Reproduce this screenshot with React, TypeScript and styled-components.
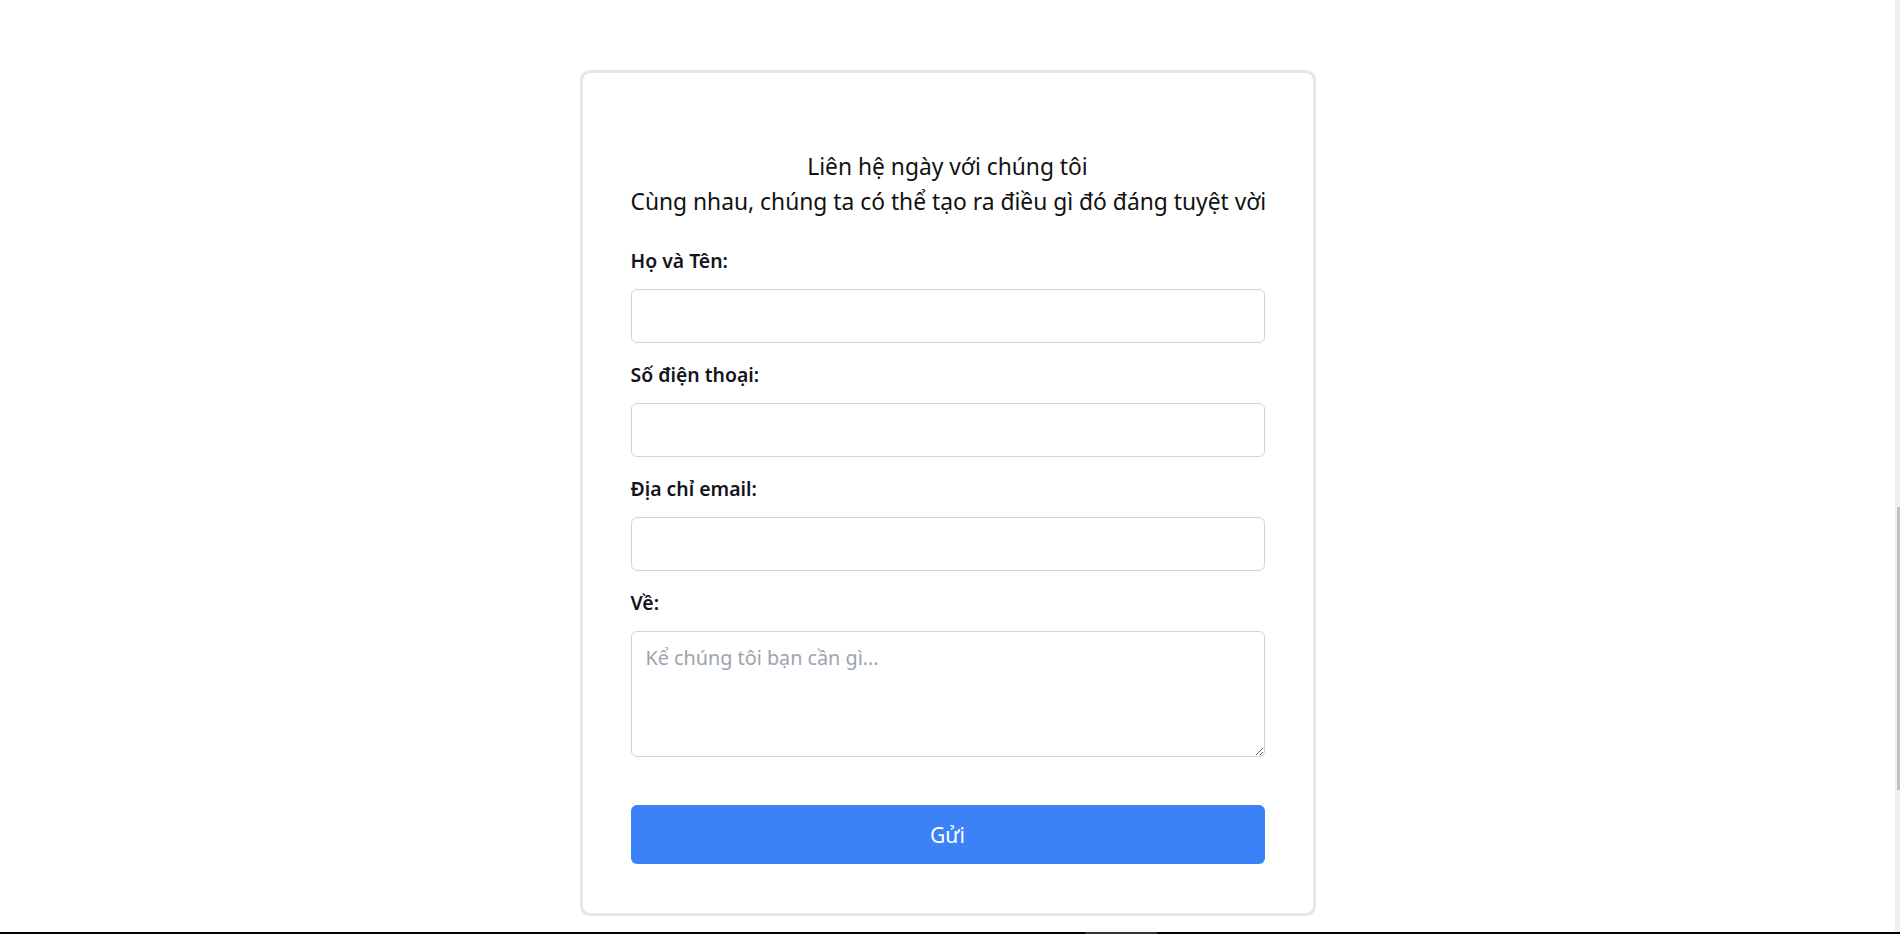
import React from "react";
import styled, { createGlobalStyle } from "styled-components";

const Global = createGlobalStyle`
  html, body { margin: 0; padding: 0; background: #fff; }
  body { font-family: "Noto Sans", "Open Sans", sans-serif; color: #111; }
  * { box-sizing: border-box; }
`;

const Page = styled.div`
  width: 1895px;
  min-height: 934px;
  padding-top: 70px;
`;

const Card = styled.form`
  width: 736px;
  margin: 0 auto;
  border: 3px solid #e5e5ea;
  border-radius: 10px;
  padding: 76px 48px 49px;
  display: flex;
  flex-direction: column;
`;

const Heading = styled.div`
  text-align: center;
  font-size: 22.8px;
  line-height: 35px;
  color: #111;
  margin-bottom: 28px;
  white-space: nowrap;
`;

const Field = styled.div`
  display: flex;
  flex-direction: column;
  margin-bottom: 18px;
`;

const Label = styled.label`
  font-size: 19.4px;
  font-weight: 600;
  line-height: 28px;
  margin-bottom: 14px;
  color: #14141f;
`;

const Input = styled.input`
  height: 54px;
  border: 1px solid #d1d5db;
  border-radius: 6px;
  padding: 0 14px;
  font: inherit;
  font-size: 20px;
  outline: none;
`;

const TextArea = styled.textarea`
  height: 126px;
  border: 1px solid #d1d5db;
  border-radius: 6px;
  padding: 11px 14px;
  font: inherit;
  font-size: 19.8px;
  line-height: 30px;
  outline: none;
  &::placeholder { color: #9ca3af; }
`;

const Submit = styled.button`
  margin-top: 30px;
  height: 59px;
  border: none;
  border-radius: 6px;
  background: #3b82f6;
  color: #fff;
  font: inherit;
  font-size: 21px;
  cursor: pointer;
`;

const ScrollRail = styled.div`
  position: fixed;
  top: 0;
  right: 0;
  width: 5px;
  height: 932px;
  background: #f0f0f0;
`;

const ScrollThumb = styled.div`
  position: absolute;
  top: 507px;
  right: 0;
  width: 3px;
  height: 283px;
  background: #c1c1c1;
`;

const BottomBar = styled.div`
  position: fixed;
  left: 0;
  bottom: 0;
  width: 100%;
  height: 2px;
  background: #000;
`;

const BarMark = styled.div`
  position: absolute;
  left: 1085px;
  top: 0;
  width: 72px;
  height: 2px;
  background: #333;
`;

const fields = [
  { id: "name", label: "Họ và Tên:", type: "text" },
  { id: "phone", label: "Số điện thoại:", type: "tel" },
  { id: "email", label: "Địa chỉ email:", type: "email" },
];

export default function App() {
  return (
    <>
      <Global />
      <Page>
        <Card onSubmit={(e) => e.preventDefault()}>
          <Heading>
            Liên hệ ngày với chúng tôi
            <br />
            Cùng nhau, chúng ta có thể tạo ra điều gì đó đáng tuyệt vời
          </Heading>
          {fields.map((f) => (
            <Field key={f.id}>
              <Label htmlFor={f.id}>{f.label}</Label>
              <Input id={f.id} type={f.type} />
            </Field>
          ))}
          <Field>
            <Label htmlFor="about">Về:</Label>
            <TextArea id="about" placeholder="Kể chúng tôi bạn cần gì..." />
          </Field>
          <Submit type="submit">Gửi</Submit>
        </Card>
      </Page>
      <ScrollRail>
        <ScrollThumb />
      </ScrollRail>
      <BottomBar>
        <BarMark />
      </BottomBar>
    </>
  );
}
